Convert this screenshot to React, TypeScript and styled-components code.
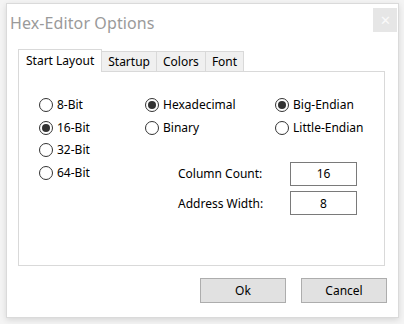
import React from 'react';
import styled, { createGlobalStyle } from 'styled-components';

const GlobalStyle = createGlobalStyle`
  html, body {
    margin: 0;
    padding: 0;
    background: #f4f4f4;
  }
  body {
    font-family: "Noto Sans", "Open Sans", sans-serif;
    font-size: 12px;
    color: #000;
  }
`;

const Screen = styled.div`
  width: 404px;
  height: 324px;
  padding: 3px 5px 0 6px;
  box-sizing: border-box;
`;

const Window = styled.div`
  width: 393px;
  height: 315px;
  background: #fff;
  border: 1px solid #dadada;
  box-sizing: border-box;
  box-shadow: 0 2px 6px rgba(0, 0, 0, 0.12);
  display: flex;
  flex-direction: column;
`;

const TitleBar = styled.div`
  height: 40px;
  display: flex;
  align-items: flex-start;
  justify-content: space-between;
  padding: 4px 0 0 3px;
  box-sizing: border-box;
`;

const Title = styled.div`
  font-size: 16px;
  color: #9a9a9a;
  line-height: 22px;
  padding-top: 4px;
  letter-spacing: 0.1px;
`;

const CloseButton = styled.div`
  width: 24px;
  height: 24px;
  margin-right: 1px;
  background: #e6e6e6;
  color: #fafafa;
  font-size: 13px;
  display: flex;
  align-items: center;
  justify-content: center;
`;

const Body = styled.div`
  padding: 5px 13px 0 11px;
`;

const TabStrip = styled.div`
  display: flex;
  align-items: flex-end;
  height: 23px;
`;

const Tab = styled.div<{ $active?: boolean }>`
  height: ${p => (p.$active ? 23 : 21)}px;
  padding: 0 ${p => (p.$active ? 7 : 6)}px;
  box-sizing: border-box;
  background: ${p => (p.$active ? '#fff' : '#f0f0f0')};
  border: 1px solid #d9d9d9;
  border-bottom: ${p => (p.$active ? 'none' : '1px solid #d9d9d9')};
  margin-left: ${p => (p.$active ? 0 : -1)}px;
  display: flex;
  align-items: center;
  line-height: 16px;
  position: relative;
  z-index: ${p => (p.$active ? 1 : 0)};
`;

const Panel = styled.div`
  height: 195px;
  margin-top: -1px;
  border: 1px solid #d9d9d9;
  box-sizing: border-box;
  padding: 22px 0 0 20px;
`;

const OptionGrid = styled.div`
  display: grid;
  grid-template-columns: 106px 130px 1fr;
  grid-auto-rows: 22.5px;
`;

const RadioLabel = styled.label`
  display: flex;
  align-items: center;
  gap: 4px;
  line-height: 16px;
`;

const RadioCircle = styled.span<{ $checked?: boolean }>`
  width: 14px;
  height: 14px;
  border: 1px solid #333;
  border-radius: 50%;
  box-sizing: border-box;
  display: flex;
  align-items: center;
  justify-content: center;
  flex-shrink: 0;

  &::after {
    content: '';
    width: 8px;
    height: 8px;
    border-radius: 50%;
    background: ${p => (p.$checked ? '#333' : 'transparent')};
  }
`;

const FieldRow = styled.div<{ $row: number }>`
  grid-column: 2 / span 2;
  grid-row: ${p => p.$row};
  display: grid;
  grid-template-columns: 112px 67px;
  align-items: center;
  padding-left: 33px;
  margin-top: ${p => (p.$row > 4 ? 7 : 0)}px;
`;

const FieldInput = styled.div`
  height: 24px;
  border: 1px solid #7a7a7a;
  box-sizing: border-box;
  display: flex;
  align-items: center;
  justify-content: center;
`;

const ButtonRow = styled.div`
  display: flex;
  justify-content: flex-end;
  gap: 15px;
  padding: 12px 11px 0 0;
`;

const Button = styled.div`
  width: 86px;
  height: 25px;
  background: #e1e1e1;
  border: 1px solid #adadad;
  box-sizing: border-box;
  display: flex;
  align-items: center;
  justify-content: center;
`;

function Radio({ label, checked }: { label: string; checked?: boolean }) {
  return (
    <RadioLabel>
      <RadioCircle $checked={checked} />
      {label}
    </RadioLabel>
  );
}

export default function App() {
  return (
    <Screen>
      <GlobalStyle />
      <Window>
        <TitleBar>
          <Title>Hex-Editor Options</Title>
          <CloseButton>✕</CloseButton>
        </TitleBar>
        <Body>
          <TabStrip>
            <Tab $active>Start Layout</Tab>
            <Tab>Startup</Tab>
            <Tab>Colors</Tab>
            <Tab>Font</Tab>
          </TabStrip>
          <Panel>
            <OptionGrid>
              <Radio label="8-Bit" />
              <Radio label="Hexadecimal" checked />
              <Radio label="Big-Endian" checked />
              <Radio label="16-Bit" checked />
              <Radio label="Binary" />
              <Radio label="Little-Endian" />
              <Radio label="32-Bit" />
              <span />
              <span />
              <Radio label="64-Bit" />
              <FieldRow $row={4}>
                <span>Column Count:</span>
                <FieldInput>16</FieldInput>
              </FieldRow>
              <FieldRow $row={5}>
                <span>Address Width:</span>
                <FieldInput>8</FieldInput>
              </FieldRow>
            </OptionGrid>
          </Panel>
        </Body>
        <ButtonRow>
          <Button>Ok</Button>
          <Button>Cancel</Button>
        </ButtonRow>
      </Window>
    </Screen>
  );
}
